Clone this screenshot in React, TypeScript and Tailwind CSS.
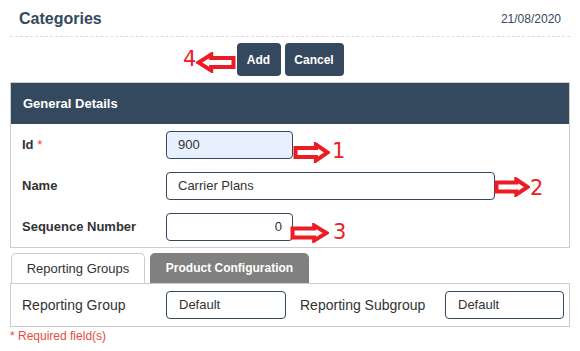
import React from "react";

const RED = "#ed1c24";

function Arrow({ left = false, w = 38, h = 22 }: { left?: boolean; w?: number; h?: number }) {
  const m = h / 2;
  const s = h * 0.22;
  const head = w * 0.38;
  const d = `M2.5,${m - s} H${w - head} V2.5 L${w - 2.5},${m} L${w - head},${h - 2.5} V${m + s} H2.5 Z`;
  return (
    <svg width={w} height={h} viewBox={`0 0 ${w} ${h}`} style={left ? { transform: "scaleX(-1)" } : undefined}>
      <path d={d} fill="#fff" stroke={RED} strokeWidth={4} strokeLinejoin="miter" />
    </svg>
  );
}

export default function App() {
  return (
    <div className="relative w-[580px] h-[351px] bg-white overflow-hidden text-[#333] font-['Liberation_Sans',Arial,sans-serif]">
      <div className="px-[10px]">
        <div className="flex items-center justify-between px-[9px] h-[37px] border-b border-dashed border-[#dcdcdc]">
          <span className="text-[16px] font-bold text-[#34495e] leading-none mt-[1px]">Categories</span>
          <span className="text-[12px] text-[#34495e] leading-none mt-[1px]">21/08/2020</span>
        </div>
        <div className="flex justify-center gap-[4px] mt-[6px]">
          <button className="h-[33px] w-[44px] rounded-[4px] bg-[#34495e] text-white text-[12px] font-bold">Add</button>
          <button className="h-[33px] w-[59px] rounded-[4px] bg-[#34495e] text-white text-[12px] font-bold">Cancel</button>
        </div>
        <div className="mt-[6px] border border-[#cccccc]">
          <div className="h-[41px] bg-[#34495e] flex items-center px-[12px] text-white text-[13px] font-bold">General Details</div>
          <div className="px-[11px] pt-[7px] pb-[6px] flex flex-col gap-[13px]">
            <div className="flex items-center">
              <div className="w-[144px] text-[13px] font-bold">Id <span className="text-[#e74c3c] font-normal">*</span></div>
              <div className="w-[127px] h-[28px] rounded-[4px] border border-[#34495e] bg-[#e8f0fe] px-[11px] flex items-center text-[13px]">900</div>
            </div>
            <div className="flex items-center">
              <div className="w-[144px] text-[13px] font-bold">Name</div>
              <div className="w-[329px] h-[28px] rounded-[4px] border border-[#34495e] px-[11px] flex items-center text-[13px]">Carrier Plans</div>
            </div>
            <div className="flex items-center">
              <div className="w-[144px] text-[13px] font-bold">Sequence Number</div>
              <div className="w-[127px] h-[28px] rounded-[4px] border border-[#34495e] px-[10px] flex items-center justify-end text-[13px]">0</div>
            </div>
          </div>
        </div>
        <div className="flex gap-[5px] mt-[5px] pl-[1px]">
          <div className="w-[134px] h-[30px] rounded-t-[5px] border border-b-0 border-[#cccccc] bg-white flex items-center justify-center text-[13px]">Reporting Groups</div>
          <div className="w-[159px] h-[30px] rounded-t-[5px] bg-[#808080] flex items-center justify-center text-[12px] font-bold text-white">Product Configuration</div>
        </div>
        <div className="h-[44px] border border-[#cccccc] flex items-center pl-[11px]">
          <div className="w-[144px] shrink-0 text-[14px]">Reporting Group</div>
          <div className="w-[120px] shrink-0 h-[28px] rounded-[4px] border border-[#34495e] px-[12px] flex items-center text-[13px]">Default</div>
          <div className="w-[159px] shrink-0 pl-[14px] text-[14px]">Reporting Subgroup</div>
          <div className="w-[119px] shrink-0 h-[28px] rounded-[4px] border border-[#34495e] px-[12px] flex items-center text-[13px]">Default</div>
        </div>
        <div className="mt-0 text-[12px] text-[#e74c3c]">* Required field(s)</div>
      </div>

      <div className="absolute left-[196px] top-[52px]"><Arrow left w={40} h={21} /></div>
      <div className="absolute left-[183px] top-[49px] text-[21px] leading-none font-['DejaVu_Sans',sans-serif]" style={{ color: RED }}>4</div>

      <div className="absolute left-[293px] top-[142px]"><Arrow w={37} h={21} /></div>
      <div className="absolute left-[332px] top-[141px] text-[21px] leading-none font-['DejaVu_Sans',sans-serif]" style={{ color: RED }}>1</div>

      <div className="absolute left-[494px] top-[177px]"><Arrow w={36} h={20} /></div>
      <div className="absolute left-[530px] top-[178px] text-[21px] leading-none font-['DejaVu_Sans',sans-serif]" style={{ color: RED }}>2</div>

      <div className="absolute left-[290px] top-[223px]"><Arrow w={39} h={20} /></div>
      <div className="absolute left-[333px] top-[222px] text-[21px] leading-none font-['DejaVu_Sans',sans-serif]" style={{ color: RED }}>3</div>
    </div>
  );
}
